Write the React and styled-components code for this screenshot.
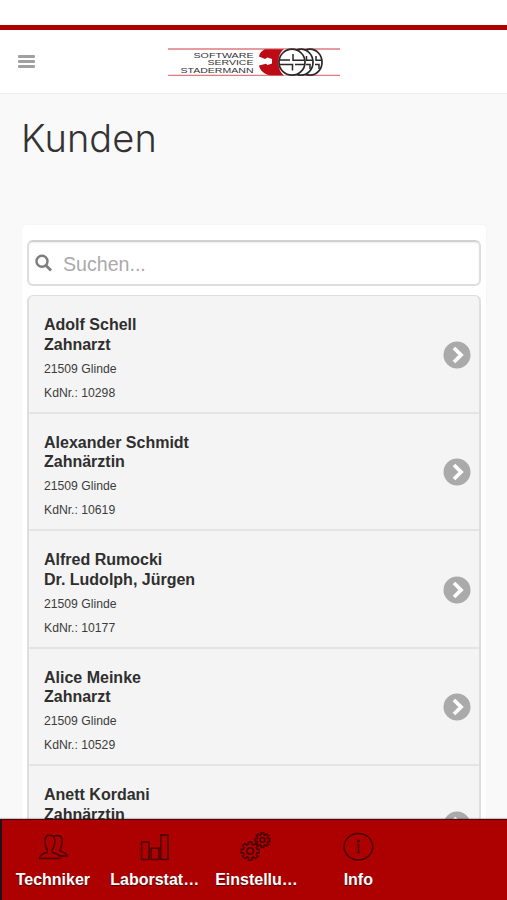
import React from 'react';
import styled, { createGlobalStyle } from 'styled-components';

const GlobalStyle = createGlobalStyle`
  * { box-sizing: border-box; }
  body { margin: 0; background: #f9f9f9; font-family: "Liberation Sans", Arial, sans-serif; color: #333; }
`;

const Page = styled.div`
  height: 900px;
  display: flex;
  flex-direction: column;
  overflow: hidden;
`;

const StatusStrip = styled.div`
  flex: none;
  height: 30px;
  background: #fff;
  border-bottom: 5px solid #ad0000;
`;

const Header = styled.header`
  flex: none;
  height: 64px;
  padding: 0 167px 0 18px;
  background: #fff;
  border-bottom: 1px solid #f0f0f0;
  display: flex;
  align-items: center;
  justify-content: space-between;
`;

const MenuButton = styled.button`
  width: 17px;
  height: 13px;
  padding: 0;
  border: 0;
  background: none;
  display: grid;
  gap: 2px;
`;

const MenuBar = styled.span`
  height: 3px;
  border-radius: 1px;
  background: #a0a0a0;
`;

const LogoSvg = styled.svg`
  display: block;
  width: 172px;
  height: 30px;
  font-family: "Liberation Sans", Arial, sans-serif;
`;

const Main = styled.main`
  flex: 1;
  min-height: 0;
  overflow: hidden;
  padding: 20px 20px 0 21px;
`;

const Title = styled.h1`
  margin: 0;
  height: 110px;
  font: 300 38px/48px Inter, sans-serif;
  letter-spacing: 0.1px;
  color: #333;
`;

const Panel = styled.section`
  background: #fff;
  border: 1px solid #f6f6f6;
  border-radius: 5px;
  padding: 15px 5px 0 5px;
`;

const SearchField = styled.label`
  height: 46px;
  border: 2px solid #dedede;
  border-top-color: #d0d0d0;
  border-radius: 6px;
  box-shadow: inset 0 1px 2px #eee;
  display: flex;
  align-items: center;
  padding-left: 6px;
  gap: 11px;
`;

const SearchIcon = styled.svg`
  width: 17px;
  height: 18px;
  fill: none;
  stroke: #7d7d7d;
  stroke-width: 2.4;
`;

const SearchInput = styled.input`
  flex: 1;
  min-width: 0;
  border: 0;
  padding: 1px 0 0;
  outline: 0;
  background: transparent;
  font: 19.6px/24px "Liberation Sans", Arial, sans-serif;
  &::placeholder { color: #aaa; opacity: 1; }
`;

const List = styled.ul`
  list-style: none;
  margin: 9px 0 0;
  padding: 0;
  border: 1px solid #dedede;
  border-width: 1px 2px;
  border-radius: 6px;
  background: #f4f4f4;
`;

const Row = styled.li`
  height: 117.5px;
  padding: 19px 8px 0 15px;
  border-bottom: 2px solid #e4e4e4;
  display: flex;
  justify-content: space-between;
`;

const Name = styled.div`
  font-size: 16px;
  font-weight: 700;
  line-height: 19.5px;
  color: #2f2f2f;
`;

const Details = styled.div`
  padding-top: 2.5px;
  font-size: 12.2px;
  line-height: 24.4px;
  color: #3c3c3c;
`;

const RowArrow = styled.svg`
  width: 28px;
  height: 28px;
  margin-top: 25.5px;
`;

const Footer = styled.footer`
  flex: none;
  height: 81px;
  background: #ad0000;
  border-top: 1px solid #480609;
  border-left: 2px solid #241018;
  box-shadow: 0 -1px 1px #0003;
  display: grid;
  grid-template-columns: repeat(5, 101.8px);
`;

const Tab = styled.a`
  display: flex;
  flex-direction: column;
  align-items: center;
  padding-top: 10px;
`;

const TabIcon = styled.svg`
  width: 32px;
  height: 34px;
  fill: none;
  stroke: #4a0000;
  stroke-width: 1.5;
  stroke-linejoin: round;
`;

const TabLabel = styled.span`
  font-size: 16px;
  font-weight: 700;
  line-height: 20px;
  margin-top: 6px;
  color: #fff;
  text-shadow: 0 1px 1px #0008;
  white-space: nowrap;
`;

function gearPath(cx, cy, outer, inner) {
  const points = [];
  for (let i = 0; i < 8; i += 1) {
    [[-0.25, inner], [-0.2, outer], [0.2, outer], [0.25, inner]].forEach(([offset, r]) => {
      const a = (i * Math.PI) / 4 + offset;
      points.push(`${(cx + Math.cos(a) * r).toFixed(2)} ${(cy + Math.sin(a) * r).toFixed(2)}`);
    });
  }
  return `M${points.join('L')}Z`;
}

const Logo = () => (
  <LogoSvg viewBox="0 0 172 30" role="img" aria-label="Software Service Stadermann">
    <path d="M0 2H172M0 28.3H172" stroke="#dc7c82" strokeWidth="1.3" />
    <g fill="#333" fontSize="7.7" textAnchor="end">
      <text x="85.5" y="11" textLength="60" lengthAdjust="spacingAndGlyphs">SOFTWARE</text>
      <text x="85.5" y="18.2" textLength="46" lengthAdjust="spacingAndGlyphs">SERVICE</text>
      <text x="85.5" y="25.5" textLength="73" lengthAdjust="spacingAndGlyphs">STADERMANN</text>
    </g>
    <path d="M97 2.3H119V28.3H102C96 27 92 23.5 91 18.5L98 16.8L99.5 18L104 16.5V12L99.5 10.5L97 12L91 9.5C91.5 6 94 3.5 97 2.3Z" fill="#bd0b15" />
    <path d="M116 2.2C108.5 7 108.5 23 116 28.4H124V2.2Z" fill="#fff" />
    <g fill="#fff" stroke="#292929" strokeWidth="1.7">
      <ellipse cx="142" cy="15.2" rx="12" ry="13" />
      <ellipse cx="133" cy="15.2" rx="12" ry="13" />
      <ellipse cx="124" cy="15.2" rx="13" ry="13" />
    </g>
    <path d="M111 13H122M125 7V13.3H136M111 17.6H124.5V23.5M127 17.6H136M138.5 9V13.3H144.5M138 17.6H142V22M148 9V13.3H153.5M147 17.6H151V22" fill="none" stroke="#292929" strokeWidth="1.5" />
  </LogoSvg>
);

const icons = {
  users: (
    <g>
      <path d="M2.5 28.5C2.8 24.8 5.5 24 10.3 22.2V19.5C8 17.2 8.3 14.5 7.9 10.5C8 7 9.5 5.3 12.8 5.3S17.7 7 17.8 10.5C17.5 14.5 17.6 17 15.3 19.5V22.2C20 24 23.2 24.8 23.5 28.5Z" />
      <path d="M16.7 6.5C18 5.6 19.2 5.4 21 5.6C24 5.8 25.3 7.5 25.2 11C25 14.5 25 17 23 19V21C26.5 22.5 30 23 30.3 26H23" />
    </g>
  ),
  chart: <path d="M2.5 12H10V29.5H2.5ZM12.2 18.3H20V29.5H12.2ZM21.7 5H29V29.5H21.7Z" />,
  gears: (
    <g>
      <path d={gearPath(10.2, 21, 9.3, 7)} />
      <circle cx="10.2" cy="21" r="3.2" />
      <path d={gearPath(22.5, 10, 7.5, 5.5)} />
      <circle cx="22.5" cy="10" r="2.4" />
    </g>
  ),
  info: (
    <g>
      <ellipse cx="16.4" cy="16.7" rx="14.3" ry="13.3" />
      <path d="M15 14.5H16.5V22.5M15.3 22.7H17.8" />
      <circle cx="16.4" cy="11" r=".7" />
    </g>
  ),
};

const customers = [
  ['Adolf Schell', 'Zahnarzt', '10298'],
  ['Alexander Schmidt', 'Zahnärztin', '10619'],
  ['Alfred Rumocki', 'Dr. Ludolph, Jürgen', '10177'],
  ['Alice Meinke', 'Zahnarzt', '10529'],
  ['Anett Kordani', 'Zahnärztin', ''],
];

const tabs = [
  ['users', 'Techniker'],
  ['chart', 'Laborstat…'],
  ['gears', 'Einstellu…'],
  ['info', 'Info'],
];

export default function App() {
  return (
    <Page>
      <GlobalStyle />
      <StatusStrip />
      <Header>
        <MenuButton aria-label="Menü"><MenuBar /><MenuBar /><MenuBar /></MenuButton>
        <Logo />
      </Header>
      <Main>
        <Title>Kunden</Title>
        <Panel>
          <SearchField>
            <SearchIcon viewBox="0 0 17 18">
              <circle cx="7" cy="7.3" r="5.5" />
              <path d="M11 11.5L16 16.5" strokeWidth="2.8" />
            </SearchIcon>
            <SearchInput placeholder="Suchen..." />
          </SearchField>
          <List>
            {customers.map(([name, role, number]) => (
              <Row key={name}>
                <div>
                  <Name>{name}</Name>
                  <Name>{role}</Name>
                  {number && (
                    <Details>
                      <div>21509 Glinde</div>
                      <div>KdNr.: {number}</div>
                    </Details>
                  )}
                </div>
                <RowArrow viewBox="0 0 28 28">
                  <circle cx="14" cy="14" r="13.5" fill="#aaa" />
                  <path d="M11 7L18 14L11 21" fill="none" stroke="#fff" strokeWidth="3.8" />
                </RowArrow>
              </Row>
            ))}
          </List>
        </Panel>
      </Main>
      <Footer>
        {tabs.map(([icon, label]) => (
          <Tab key={label}>
            <TabIcon viewBox="0 0 32 34">{icons[icon]}</TabIcon>
            <TabLabel>{label}</TabLabel>
          </Tab>
        ))}
      </Footer>
    </Page>
  );
}
